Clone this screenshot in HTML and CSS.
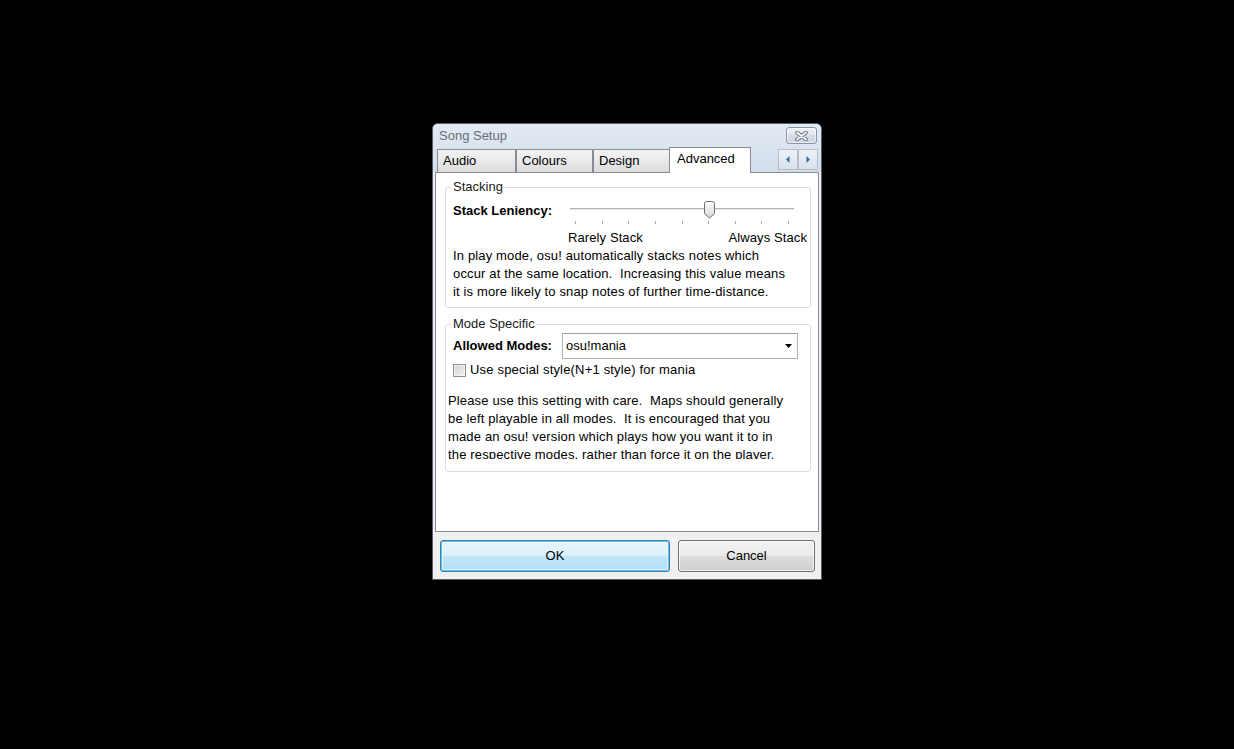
FILE: index.html
```html
<!DOCTYPE html>
<html>
<head>
<meta charset="utf-8">
<link rel="stylesheet" href="styles.css">
</head>
<body>
<div class="desk">
  <div class="window">
    <div class="head">
      <div class="titlebar">
        <span class="title">Song Setup</span>
        <span class="close">
          <svg width="13" height="10" viewBox="0 0 13 10">
            <path d="M2 1.5 L11 8.5 M11 1.5 L2 8.5" stroke="#5f6b7b" stroke-width="3.6" stroke-linecap="round" fill="none"/>
            <path d="M2 1.5 L11 8.5 M11 1.5 L2 8.5" stroke="#ffffff" stroke-width="1.8" stroke-linecap="round" fill="none"/>
          </svg>
        </span>
      </div>
      <div class="tabstrip">
        <div class="tab t-audio">Audio</div>
        <div class="tab t-colours">Colours</div>
        <div class="tab t-design">Design</div>
        <div class="tab active t-adv">Advanced</div>
        <div class="spacer"></div>
        <div class="scroll">
          <span class="arr"><svg width="4" height="7" viewBox="0 0 4 7"><path d="M3.5 0 L0 3.5 L3.5 7 Z" fill="#3d69a8"/></svg></span>
          <span class="arr"><svg width="4" height="7" viewBox="0 0 4 7"><path d="M0.5 0 L4 3.5 L0.5 7 Z" fill="#3d69a8"/></svg></span>
        </div>
      </div>
    </div>
    <div class="panel">
      <fieldset class="group g-stack">
        <legend>Stacking</legend>
        <div class="row">
          <span class="lbl lbl-stack">Stack Leniency:</span>
          <div class="slider">
            <div class="track"></div>
            <svg class="thumb" width="11" height="18" viewBox="0 0 11 18">
              <defs>
                <linearGradient id="tg" x1="0" y1="0" x2="0" y2="1">
                  <stop offset="0" stop-color="#ffffff"/>
                  <stop offset="1" stop-color="#d6d6d6"/>
                </linearGradient>
              </defs>
              <path d="M0.5 2.5 Q0.5 0.5 2.5 0.5 H8.5 Q10.5 0.5 10.5 2.5 V12.5 L5.5 17 L0.5 12.5 Z" fill="url(#tg)" stroke="#6f6f6f"/>
            </svg>
            <div class="ticks"><i></i><i></i><i></i><i></i><i></i><i></i><i></i><i></i><i></i></div>
          </div>
        </div>
        <div class="ends"><span>Rarely Stack</span><span>Always Stack</span></div>
        <p class="desc">In play mode, osu! automatically stacks notes which<br>occur at the same location.&nbsp; Increasing this value means<br>it is more likely to snap notes of further time-distance.</p>
      </fieldset>
      <fieldset class="group g-mode">
        <legend>Mode Specific</legend>
        <div class="row row-mode">
          <span class="lbl lbl-mode">Allowed Modes:</span>
          <div class="select">
            <span class="sel-text">osu!mania</span>
            <svg width="7" height="4" viewBox="0 0 7 4"><path d="M0 0 H7 L3.5 4 Z" fill="#000"/></svg>
          </div>
        </div>
        <div class="check-row">
          <span class="check"></span>
          <span>Use special style(N+1 style) for mania</span>
        </div>
        <p class="desc desc2">Please use this setting with care.&nbsp; Maps should generally<br>be left playable in all modes.&nbsp; It is encouraged that you<br>made an osu! version which plays how you want it to in<br>the respective modes, rather than force it on the player.</p>
      </fieldset>
    </div>
    <div class="buttons">
      <div class="btn ok">OK</div>
      <div class="btn cancel">Cancel</div>
    </div>
  </div>
</div>
</body>
</html>
```
FILE: styles.css
```css
* { box-sizing: border-box; }
html, body { margin: 0; height: 100%; }
body {
  background: #000;
  font-family: "Liberation Sans", Arial, sans-serif;
  font-size: 13px;
  color: #000;
  overflow: hidden;
}
.desk { padding: 123px 0 0 432px; }

.window {
  width: 390px;
  height: 457px;
  border: 1px solid #56606c;
  border-radius: 6px 6px 0 0;
  background: #f0f0f0;
  display: flex;
  flex-direction: column;
  box-shadow: inset 0 1px 0 #f4f8fc;
}

.head {
  background: linear-gradient(#e2eaf4, #d2deeb);
  border-radius: 5px 5px 0 0;
}

.titlebar {
  height: 23px;
  display: flex;
  align-items: flex-start;
  justify-content: space-between;
}
.title {
  padding: 1px 0 0 6px;
  line-height: 22px;
  color: #6a6f76;
}
.close {
  margin: 3px 4px 0 0;
  width: 31px;
  height: 17px;
  border: 1px solid #8895a7;
  border-radius: 3px;
  background: linear-gradient(#f1f4f8, #dde4ed 50%, #d2dbe6 50%, #cdd6e2);
  box-shadow: inset 0 0 0 1px rgba(255,255,255,0.6);
  display: flex;
  align-items: center;
  justify-content: center;
}

.tabstrip {
  height: 25px;
  display: flex;
  align-items: flex-start;
  padding-left: 4px;
}
.tab {
  height: 23px;
  margin-top: 2px;
  border: 1px solid #898c95;
  border-bottom: none;
  background: linear-gradient(#f3f3f3, #e9e9e9 50%, #dcdcdc);
  padding-left: 5px;
  line-height: 22px;
  color: #000;
}
.t-audio { width: 79px; }
.t-colours { width: 77px; }
.t-design { width: 77px; margin-right: -1px; }
.tab.active {
  width: 82px;
  height: 26px;
  margin-top: 0;
  margin-bottom: -1px;
  background: #fff;
  padding-left: 7px;
  line-height: 22px;
  position: relative;
  z-index: 1;
}
.spacer { flex: 1; }
.scroll {
  display: flex;
  margin: 2px 3px 0 0;
}
.arr {
  width: 20px;
  height: 21px;
  border: 1px solid #b3bfcd;
  background: linear-gradient(#eef2f7, #d9e1eb);
  display: flex;
  align-items: center;
  justify-content: center;
}

.panel {
  margin: 0 2px;
  height: 360px;
  border: 1px solid #898c95;
  background: #fff;
  padding-top: 6px;
}

.group {
  margin: 0 7px 0 9px;
  padding: 0 6px 6px 7px;
  border: 1px solid #d5dfe5;
  border-radius: 3px;
  min-width: 0;
}
.group legend {
  padding: 0 2px;
  margin-left: -2px;
  line-height: 16px;
  color: #1a1a1a;
}
.g-mode { margin-top: 8px; padding-bottom: 12px; }

.row {
  display: flex;
  align-items: flex-start;
  margin-top: 6px;
}
.lbl {
  font-weight: bold;
  line-height: 20px;
  white-space: nowrap;
}
.lbl-stack { width: 117px; }

.slider {
  position: relative;
  width: 224px;
  height: 26px;
}
.track {
  position: absolute;
  left: 0;
  right: 0;
  top: 7px;
  height: 2px;
  border-top: 1px solid #b4b4b4;
  background: #e6e6e6;
}
.thumb {
  position: absolute;
  left: 134px;
  top: 0;
}
.ticks {
  position: absolute;
  left: 5px;
  right: 5px;
  top: 20px;
  display: flex;
  justify-content: space-between;
}
.ticks i {
  display: block;
  width: 1px;
  height: 3px;
  background: #a6a6a6;
}

.ends {
  margin: 2px -3px 0 115px;
  display: flex;
  justify-content: space-between;
  line-height: 18px;
  letter-spacing: 0.1px;
}

.desc {
  margin: 0;
  line-height: 18px;
  white-space: nowrap;
  letter-spacing: 0.15px;
}

.row-mode { margin-top: 1px; align-items: center; }
.lbl-mode { width: 109px; }
.select {
  width: 236px;
  height: 26px;
  border: 1px solid #acb2ba;
  border-top-color: #9ea4ad;
  background: #fff;
  display: flex;
  align-items: center;
  justify-content: space-between;
  padding: 0 5px 0 3px;
}
.sel-text { margin-top: -1px; }

.check-row {
  margin-top: 3px;
  display: flex;
  align-items: center;
  line-height: 16px;
  height: 16px;
  letter-spacing: 0.18px;
}
.check {
  width: 13px;
  height: 13px;
  border: 1px solid #8e8f8f;
  background: linear-gradient(135deg, #d2d2d2, #f4f4f4);
  box-shadow: inset 0 0 0 1px #f2f2f2;
  margin: 1px 4px 0 0;
}

.desc2 {
  margin: 14px 0 0 -5px;
  height: 67px;
  overflow: hidden;
}

.buttons {
  display: flex;
  gap: 8px;
  padding: 8px 0 0 7px;
}
.btn {
  height: 32px;
  border-radius: 3px;
  display: flex;
  align-items: center;
  justify-content: center;
  padding-bottom: 1px;
}
.ok {
  width: 230px;
  border: 1px solid #3c7fb1;
  background: linear-gradient(#e9f5fc, #dbf0fb 48%, #c1e5f8 52%, #b3dff6);
  box-shadow: inset 0 0 0 1px #63c1ee, inset 0 0 0 2px rgba(255,255,255,0.5);
}
.cancel {
  width: 137px;
  border: 1px solid #707070;
  background: linear-gradient(#f2f2f2, #ebebeb 48%, #dddddd 52%, #cfcfcf);
  box-shadow: inset 0 0 0 1px rgba(255,255,255,0.7);
}
```
